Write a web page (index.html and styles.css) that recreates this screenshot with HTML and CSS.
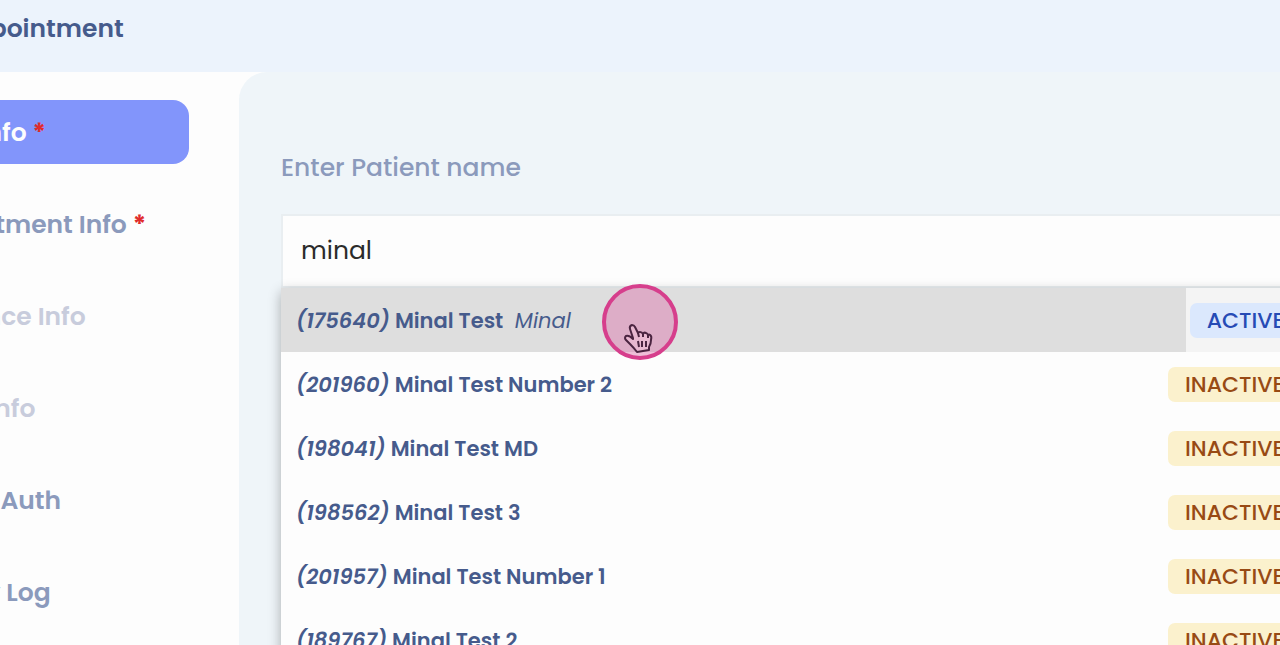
FILE: index.html
```
<!DOCTYPE html>
<html lang="en">
<head>
  <meta charset="UTF-8" />
  <meta name="viewport" content="width=device-width, initial-scale=1" />
  <title>New Appointment</title>
  <link rel="stylesheet" href="styles.css">
</head>
<body>
  <header class="topbar">
    <h1>New Appointment</h1>
  </header>

  <div class="layout">
    <nav class="sidebar">
      <a href="#basic" class="step active">Basic Info <span class="required">*</span></a>
      <a href="#appointment" class="step">Appointment Info <span class="required">*</span></a>
      <a href="#insurance" class="step disabled">Insurance Info</a>
      <a href="#billing" class="step disabled">Billing Info</a>
      <a href="#auth" class="step">Patient Auth</a>
      <a href="#log" class="step">Activity Log</a>
    </nav>

    <main class="content">
      <label for="patient-name">Enter Patient name</label>
      <input type="text" id="patient-name" name="patient-name" value="minal" autocomplete="off" />

      <ul class="results">
        <li class="result hovered">
          <span class="name"><b><i>(175640)</i> Minal Test</b> <i class="alias">Minal</i></span>
          <span class="badge badge-active">ACTIVE</span>
          <span class="pointer">
            <svg width="30" height="32" viewBox="0 0 30 32" aria-hidden="true">
              <path d="M9 16L6 7Q5 4 8 3Q10 3 11 5L14 11Q14 10 16 10Q18 10 19 12Q20 10 22 11Q23 11 24 13Q25 12 26 13Q28 14 27 18Q27 22 25 25L25 28L13 30Q10 26 6 22L2 18Q0 16 2 14Q5 13 9 17Z" />
              <path class="fingers" d="M14 11L15 15M19 12V15M24 13V16M14 19L15 25M18 19V25M22 19V25" />
            </svg>
          </span>
        </li>
        <li class="result">
          <span class="name"><b><i>(201960)</i> Minal Test Number 2</b></span>
          <span class="badge badge-inactive">INACTIVE</span>
        </li>
        <li class="result">
          <span class="name"><b><i>(198041)</i> Minal Test MD</b></span>
          <span class="badge badge-inactive">INACTIVE</span>
        </li>
        <li class="result">
          <span class="name"><b><i>(198562)</i> Minal Test 3</b></span>
          <span class="badge badge-inactive">INACTIVE</span>
        </li>
        <li class="result">
          <span class="name"><b><i>(201957)</i> Minal Test Number 1</b></span>
          <span class="badge badge-inactive">INACTIVE</span>
        </li>
        <li class="result">
          <span class="name"><b><i>(189767)</i> Minal Test 2</b></span>
          <span class="badge badge-inactive">INACTIVE</span>
        </li>
      </ul>
    </main>
  </div>
</body>
</html>
```
FILE: styles.css
```
* {
  box-sizing: border-box;
}
html {
  overflow: hidden;
}
/* the page is scrolled sideways, both edges run out of the window */
body {
  font-family: "Poppins", "Inter", sans-serif;
  background: #fdfdfd;
  color: #465b8c;
  margin: 0 -21px 0 -106px;
  height: 100vh;
  display: flex;
  flex-direction: column;
  overflow: hidden;
}
.topbar {
  flex: none;
  background: #ecf3fc;
  padding: 13px 0 27px;
}
.topbar h1 {
  margin: 0;
  font-size: 25px;
  line-height: 32px;
  font-weight: 600;
}
.layout {
  flex: 1;
  display: flex;
  min-height: 0;
}
.sidebar {
  flex: none;
  width: 345px;
  padding: 28px 50px 0 0;
  display: flex;
  flex-direction: column;
  gap: 28px;
}
.step {
  flex: none;
  height: 64px;
  padding-left: 10px;
  line-height: 66px;
  font-size: 25px;
  font-weight: 600;
  color: #8b9abc;
  text-decoration: none;
  white-space: nowrap;
}
.step.active {
  background: #8295fb;
  color: #fdfdfd;
  border-radius: 16px;
}
.step.disabled {
  color: #c8ccdc;
}
.required {
  color: #e02b2b;
  font-weight: 700;
}
.content {
  flex: 1;
  min-width: 0;
  background: #eff5f9;
  border-top-left-radius: 28px;
  padding: 80px 0 0 42px;
}
.content label {
  display: block;
  font-size: 25px;
  line-height: 32px;
  font-weight: 500;
  color: #8b9abc;
  margin-bottom: 30px;
}
.content input {
  display: block;
  width: 100%;
  height: 74px;
  padding: 0 18px;
  border: 2px solid #e9eef1;
  border-radius: 0;
  background: #fdfdfd;
  font-family: inherit;
  font-size: 25px;
  color: #2b2b2b;
  outline: none;
}
.results {
  list-style: none;
  margin: 0;
  padding: 0;
  background: #fdfdfd;
  box-shadow: 0 4px 12px rgba(0, 0, 0, 0.3);
}
.result {
  position: relative;
  display: flex;
  align-items: center;
  gap: 4px;
  height: 64px;
  font-size: 22px;
}
.result.hovered {
  background: #f4f4f4;
}
.name {
  flex: 1;
  line-height: 66px;
  height: 64px;
  padding-left: 15px;
  font-size: 21px;
}
.hovered .name {
  background: #dedede;
}
.name b {
  font-weight: 600;
}
.alias {
  margin-left: 6px;
}
.badge {
  flex: none;
  padding: 0 17px;
  border-radius: 7px;
  line-height: 35px;
  font-weight: 500;
}
.badge-active {
  background: #dbe8fd;
  color: #264bb5;
}
.badge-inactive {
  background: #fbf1cd;
  color: #984a14;
}
.pointer {
  position: absolute;
  left: 321px;
  top: -4px;
  width: 76px;
  height: 76px;
  border: 4px solid #d63e8c;
  border-radius: 50%;
  background: rgba(219, 112, 170, 0.45);
  z-index: 1;
}
.pointer svg {
  position: absolute;
  left: 18px;
  top: 34px;
  fill: #e8b8d0;
  stroke: #4a2440;
  stroke-width: 2;
  stroke-linejoin: round;
}
.pointer .fingers {
  fill: none;
}
```
